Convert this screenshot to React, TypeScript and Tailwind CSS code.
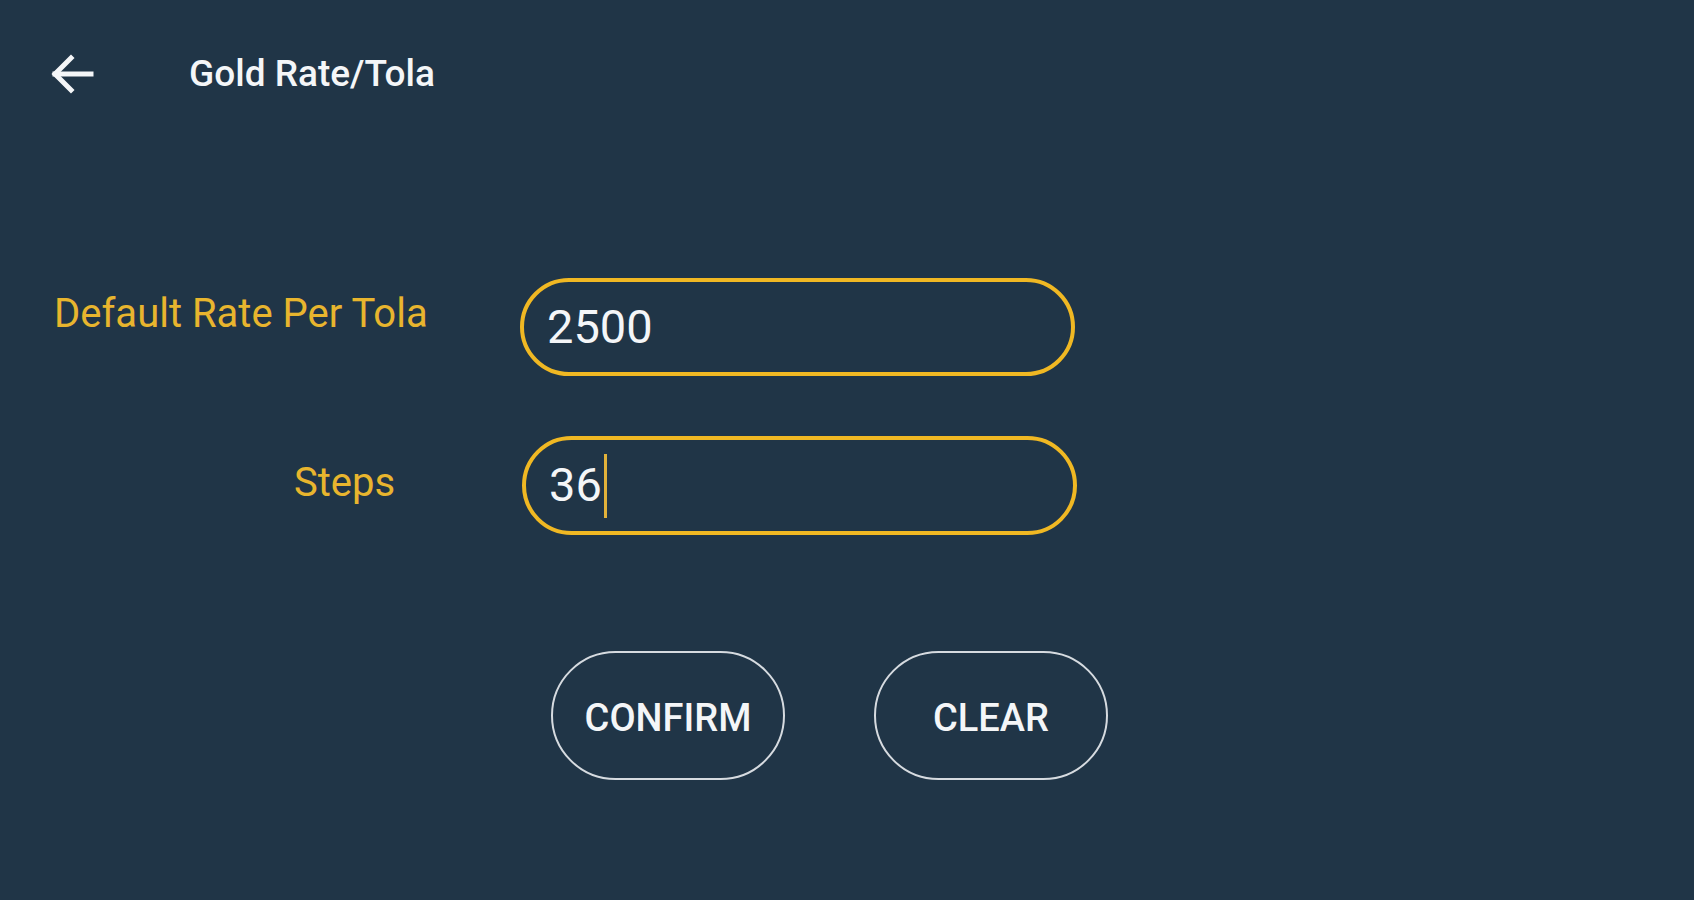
import React from "react";

export default function App() {
  return (
    <div
      className="w-full h-[900px] bg-[#203547] text-white overflow-hidden"
      style={{ fontFamily: "Roboto, 'Noto Sans', sans-serif" }}
    >
      <div className="flex items-center h-[148px] pb-[0px]">
        <div className="ml-[49px] w-[46px] h-[46px] flex items-center justify-center">
          <svg width="45" height="42" viewBox="0 0 45 42" fill="none" stroke="#f4f6f8" strokeWidth="5" strokeLinecap="square">
            <path d="M5 21 H41" />
            <path d="M21 5 L5 21 L21 37" strokeLinejoin="miter" />
          </svg>
        </div>
        <div className="ml-[94px] text-[37px] font-medium tracking-[0px] text-[#f4f6f8]">Gold Rate/Tola</div>
      </div>

      <div className="mt-[130px] flex items-center">
        <div className="w-[520px] pl-[54px] mb-[26px] text-[40px] leading-none text-[#e8b52e]">Default Rate Per Tola</div>
        <div className="w-[555px] h-[98px] rounded-full border-[4px] border-[#f0b823] flex items-center pl-[23px] text-[47px] text-[#f4f6f8]">
          2500
        </div>
      </div>

      <div className="mt-[60px] flex items-center">
        <div className="w-[522px] pl-[294px] mb-[6px] text-[40px] leading-none text-[#e8b52e]">Steps</div>
        <div className="w-[555px] h-[99px] rounded-full border-[4px] border-[#f0b823] flex items-center pl-[23px] text-[47px] text-[#f4f6f8]">
          <span>36</span>
          <span className="ml-[2px] w-[3px] h-[64px] bg-[#e2b23a]" />
        </div>
      </div>

      <div className="mt-[116px] flex">
        <button className="ml-[551px] w-[234px] h-[129px] pt-[6px] rounded-full border-[2px] border-[#d6dbe0] text-[38px] font-medium text-[#f4f6f8] flex items-center justify-center">
          CONFIRM
        </button>
        <button className="ml-[89px] w-[234px] h-[129px] pt-[6px] rounded-full border-[2px] border-[#d6dbe0] text-[38px] font-medium text-[#f4f6f8] flex items-center justify-center">
          CLEAR
        </button>
      </div>
    </div>
  );
}
